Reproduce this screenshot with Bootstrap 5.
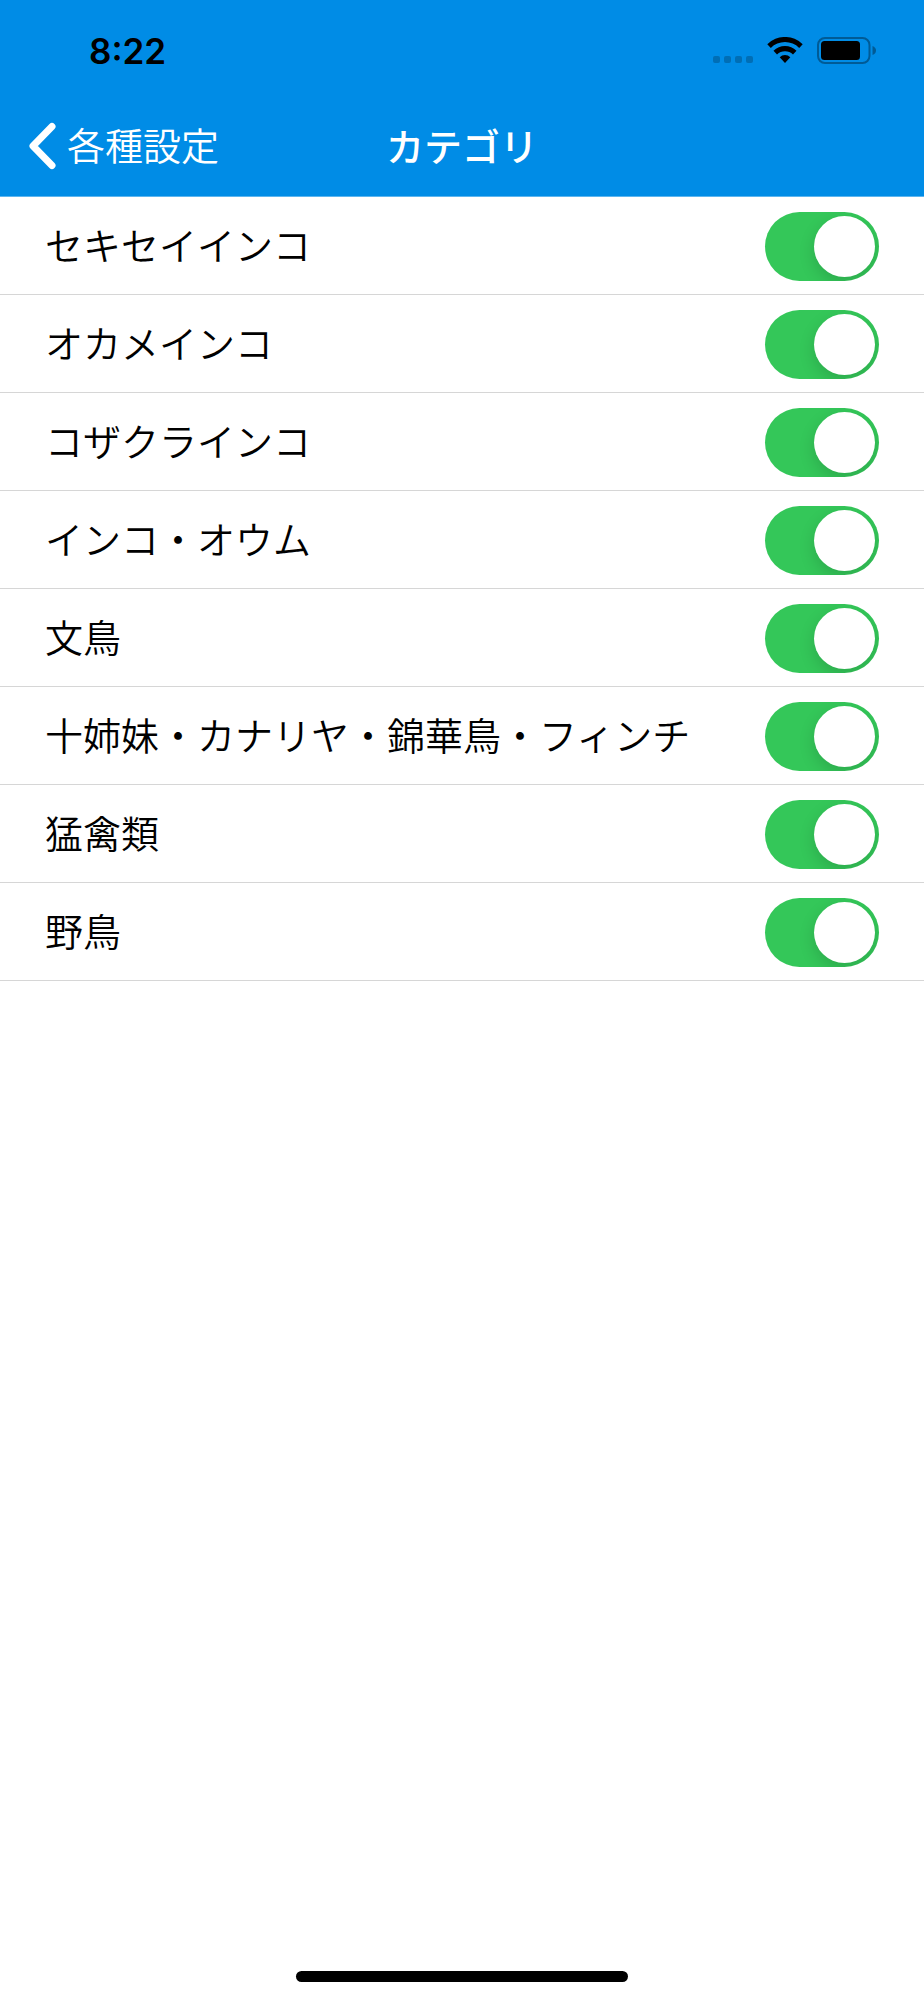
<!DOCTYPE html>
<html lang="ja">
<head>
<meta charset="utf-8">
<meta name="viewport" content="width=device-width, initial-scale=1">
<title>カテゴリ</title>
<link href="https://cdn.jsdelivr.net/npm/bootstrap@5.3.0/dist/css/bootstrap.min.css" rel="stylesheet">
<style>
  body { font-family: "Noto Sans CJK JP", sans-serif; color: #000; background: #fff; }
  .app-header { background: #008ce6; border-bottom: 1px solid #5cb5ef; }
  .status-bar { height: 102px; padding: 0 48px 0 89px; }
  .clock { font: 600 35px/40px Inter, sans-serif; }
  .title-bar { height: 94px; padding: 0 28px; color: #fff; font-size: 38px; line-height: 56px; }
  .title-bar h1 { font-size: 38px; line-height: 56px; font-weight: 500; padding-bottom: 8px; }
  .back-link { color: #fff; font-weight: 350; gap: 10px; }
  .back-link svg { margin-top: 4px; }
  .category-row { height: 98px; padding: 1px 45px 0; color: #000; background: #fff; }
  .list-group-flush > .category-row, .list-group-flush > .category-row:last-child { border-width: 0 0 1px; border-color: #d6d6d6; }
  .category-row label { font-size: 38px; line-height: 56px; font-weight: 350; padding-bottom: 4px; }
  .category-row .form-check-input {
    width: 114px; height: 69px; margin: 0; border: 0; float: none; flex: none;
    background: #34c759; border-radius: 35px; position: relative; overflow: hidden;
  }
  .category-row .form-check-input::before {
    content: ""; display: block; width: 61px; height: 61px; margin: 4px 4px 4px auto;
    border-radius: 50%; background: #fff; box-shadow: 0 6px 16px rgba(0, 0, 0, .15);
  }
  .category-row .form-check-input:not(:checked) { background: #e9e9ea; }
  .category-row .form-check-input:not(:checked)::before { margin-left: 4px; }
  .home-bar { width: 36%; height: 11px; border-radius: 6px; background: #000; margin-bottom: 18px; }
</style>
</head>
<body class="d-flex flex-column min-vh-100">
<header class="app-header">
  <div class="status-bar d-flex align-items-center justify-content-between">
    <span class="clock">8:22</span>
    <svg width="164" height="28" viewBox="0 0 164 28" role="img" aria-label="Wi-Fi、バッテリー">
      <g fill="#006eb5">
        <rect x="1" y="19" width="7" height="7" rx="2"/><rect x="12" y="19" width="7" height="7" rx="2"/>
        <rect x="23" y="19" width="7" height="7" rx="2"/><rect x="34" y="19" width="7" height="7" rx="2"/>
      </g>
      <path d="M55.300 7.300 A25 25 0 0 1 90.700 7.300 L87.200 11 A20 20 0 0 0 58.800 11Z"/>
      <path d="M61.500 13.800 A16.300 16.300 0 0 1 84.500 13.800 L81 17.400 A11.500 11.500 0 0 0 65 17.400Z"/>
      <path d="M67.700 20.200 A7.600 7.600 0 0 1 78.300 20.200 L73 26Z"/>
      <rect x="106" y="1" width="51.500" height="25" rx="7" fill="none" stroke="#005b96" stroke-width="2"/>
      <rect x="109" y="4" width="39" height="19" rx="3.500"/>
      <path d="M160.500 9 Q164 10.500 164 13.500 Q164 16.500 160.500 18Z" fill="#005b96"/>
    </svg>
  </div>
  <nav class="title-bar row g-0 align-items-center" aria-label="ナビゲーション">
    <div class="col">
      <a class="back-link d-inline-flex align-items-center text-decoration-none" href="#">
        <svg width="29" height="48" viewBox="0 0 29 48" fill="none" stroke="#fff" stroke-width="7" stroke-linecap="round" stroke-linejoin="round" aria-hidden="true"><path d="M24 4.500 L5 24 L24 43.500"/></svg>
        <span>各種設定</span>
      </a>
    </div>
    <h1 class="col-auto m-0">カテゴリ</h1>
    <div class="col"></div>
  </nav>
</header>
<main class="flex-grow-1">
  <ul class="list-group list-group-flush">
    <li class="list-group-item category-row form-switch d-flex align-items-center justify-content-between"><label for="c1">セキセイインコ</label><input class="form-check-input" type="checkbox" role="switch" id="c1" checked></li>
    <li class="list-group-item category-row form-switch d-flex align-items-center justify-content-between"><label for="c2">オカメインコ</label><input class="form-check-input" type="checkbox" role="switch" id="c2" checked></li>
    <li class="list-group-item category-row form-switch d-flex align-items-center justify-content-between"><label for="c3">コザクラインコ</label><input class="form-check-input" type="checkbox" role="switch" id="c3" checked></li>
    <li class="list-group-item category-row form-switch d-flex align-items-center justify-content-between"><label for="c4">インコ・オウム</label><input class="form-check-input" type="checkbox" role="switch" id="c4" checked></li>
    <li class="list-group-item category-row form-switch d-flex align-items-center justify-content-between"><label for="c5">文鳥</label><input class="form-check-input" type="checkbox" role="switch" id="c5" checked></li>
    <li class="list-group-item category-row form-switch d-flex align-items-center justify-content-between"><label for="c6">十姉妹・カナリヤ・錦華鳥・フィンチ</label><input class="form-check-input" type="checkbox" role="switch" id="c6" checked></li>
    <li class="list-group-item category-row form-switch d-flex align-items-center justify-content-between"><label for="c7">猛禽類</label><input class="form-check-input" type="checkbox" role="switch" id="c7" checked></li>
    <li class="list-group-item category-row form-switch d-flex align-items-center justify-content-between"><label for="c8">野鳥</label><input class="form-check-input" type="checkbox" role="switch" id="c8" checked></li>
  </ul>
</main>
<div class="home-bar mx-auto"></div>
<script src="https://cdn.jsdelivr.net/npm/bootstrap@5.3.0/dist/js/bootstrap.bundle.min.js"></script>
</body>
</html>
